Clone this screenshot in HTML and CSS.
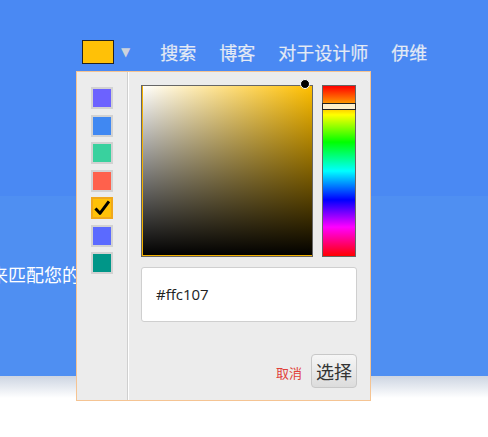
FILE: index.html
```html
<!DOCTYPE html>
<html lang="zh">
<head>
  <meta charset="UTF-8" />
  <title>颜色选择</title>
  <link rel="stylesheet" href="styles.css">
</head>
<body>

  <div class="hero">
    <div class="topbar">
      <div class="nav">
        <button class="color-btn"><span class="color-chip"></span><span class="caret">▼</span></button>
        <a class="nav-link">搜索</a>
        <a class="nav-link">博客</a>
        <a class="nav-link">对于设计师</a>
        <a class="nav-link">伊维</a>
      </div>
    </div>
    <div class="band">
      <p class="lead">来匹配您的颜色</p>
    </div>
  </div>
  <div class="fade"></div>

  <div class="picker">
    <div class="swatches">
      <span class="swatch" style="background:#6c62ff"></span>
      <span class="swatch" style="background:#4088f2"></span>
      <span class="swatch" style="background:#39d19e"></span>
      <span class="swatch" style="background:#ff614c"></span>
      <span class="swatch selected" style="background:#ffc107">
        <svg viewBox="0 0 22 22" width="20" height="20"><path d="M3 11.5 L8.5 17.5 L19.5 3" fill="none" stroke="#000" stroke-width="3.6" stroke-linejoin="round"/></svg>
      </span>
      <span class="swatch" style="background:#5b6aff"></span>
      <span class="swatch" style="background:#009688"></span>
    </div>

    <div class="panel">
      <div class="pickers">
        <div class="sat-box">
          <span class="sat-handle"></span>
        </div>
        <div class="hue-bar">
          <span class="hue-handle"></span>
        </div>
      </div>
      <div class="hex-input">#ffc107</div>
      <div class="actions">
        <a class="cancel">取消</a>
        <button class="choose">选择</button>
      </div>
    </div>
  </div>

</body>
</html>
```

FILE: styles.css
```css
body {
  margin: 0;
  padding: 0;
  background: #fff;
  font-family: "Noto Sans CJK SC", "Noto Sans", sans-serif;
  width: 488px;
  height: 437px;
  overflow: hidden;
  position: relative;
}

.hero {
  height: 376px;
  background: #4f8ff2;
  overflow: hidden;
}

.topbar {
  height: 196px;
  background: #4a89f3;
}

.nav {
  display: flex;
  align-items: center;
  padding: 40px 0 0 82px;
  height: 24px;
}

.color-btn {
  display: flex;
  align-items: center;
  background: none;
  border: none;
  padding: 0;
  margin-right: 30px;
}

.color-chip {
  display: block;
  width: 30px;
  height: 22px;
  background: #ffc107;
  border: 1px solid #222;
}

.caret {
  color: #ccd3dd;
  font-size: 12px;
  margin-left: 7px;
  line-height: 1;
  font-family: "DejaVu Sans", sans-serif;
}

.nav-link {
  color: #e4eaf4;
  font-size: 18px;
  line-height: 24px;
  margin-right: 23px;
  -webkit-text-stroke: 0.2px #e4eaf4;
}

.band {
  padding-top: 65px;
}

.lead {
  margin: 0 0 0 -10px;
  color: #fff;
  font-size: 18px;
  line-height: 26px;
  white-space: nowrap;
}

.fade {
  height: 22px;
  background: linear-gradient(to bottom, #cdd5e2, #fff);
}

.picker {
  position: absolute;
  left: 76px;
  top: 71px;
  width: 293px;
  height: 328px;
  background: #ececec;
  border: 1px solid #f5c493;
  display: flex;
}

.swatches {
  width: 51px;
  border-right: 1px solid #cfcfcf;
  box-shadow: 1px 0 0 #fff;
  padding: 15px 0 0 14px;
  box-sizing: border-box;
  display: flex;
  flex-direction: column;
  gap: 5.5px;
}

.swatch {
  display: flex;
  align-items: center;
  justify-content: center;
  width: 18px;
  height: 18px;
  border: 2px solid #d2d2d2;
}

.swatch.selected {
  border-color: #f0a81c;
}

.panel {
  flex: 1;
  padding: 13px 13px 12px 13px;
  display: flex;
  flex-direction: column;
}

.pickers {
  display: flex;
  gap: 9px;
}

.sat-box {
  position: relative;
  width: 170px;
  height: 170px;
  border: 1px solid #666;
  box-shadow: inset 1px -1px 0 #f2b000;
  background:
    linear-gradient(to top, #000, rgba(0, 0, 0, 0)),
    linear-gradient(to right, #fff, #ffbf00);
}

.sat-handle {
  position: absolute;
  right: 2px;
  top: -7px;
  width: 8px;
  height: 8px;
  border-radius: 50%;
  background: #000;
  border: 1px solid #fff;
}

.hue-bar {
  position: relative;
  width: 32px;
  height: 170px;
  border: 1px solid #666;
  background: linear-gradient(to bottom, #f00 0%, #ff0 17%, #0f0 33%, #0ff 50%, #00f 67%, #f0f 83%, #f00 100%);
}

.hue-handle {
  position: absolute;
  left: -1px;
  right: -1px;
  top: 17px;
  height: 5px;
  background: #fff0cc;
  border: 1px solid #222;
}

.hex-input {
  margin-top: 10px;
  height: 53px;
  background: #fff;
  border: 1px solid #cfcfcf;
  border-radius: 3px;
  padding-left: 14px;
  font-family: "Open Sans", "Noto Sans", sans-serif;
  font-size: 15px;
  line-height: 53px;
  color: #222;
}

.actions {
  margin-top: auto;
  display: flex;
  align-items: center;
  justify-content: flex-end;
  gap: 9px;
}

.cancel {
  color: #e0403a;
  font-size: 13px;
  padding-top: 3px;
}

.choose {
  width: 46px;
  height: 34px;
  padding: 0;
  font-family: "Noto Sans CJK SC", sans-serif;
  font-size: 18px;
  color: #333;
  background: linear-gradient(to bottom, #f6f6f6, #dcdcdc);
  border: 1px solid #c8c8c8;
  border-radius: 4px;
}
```
